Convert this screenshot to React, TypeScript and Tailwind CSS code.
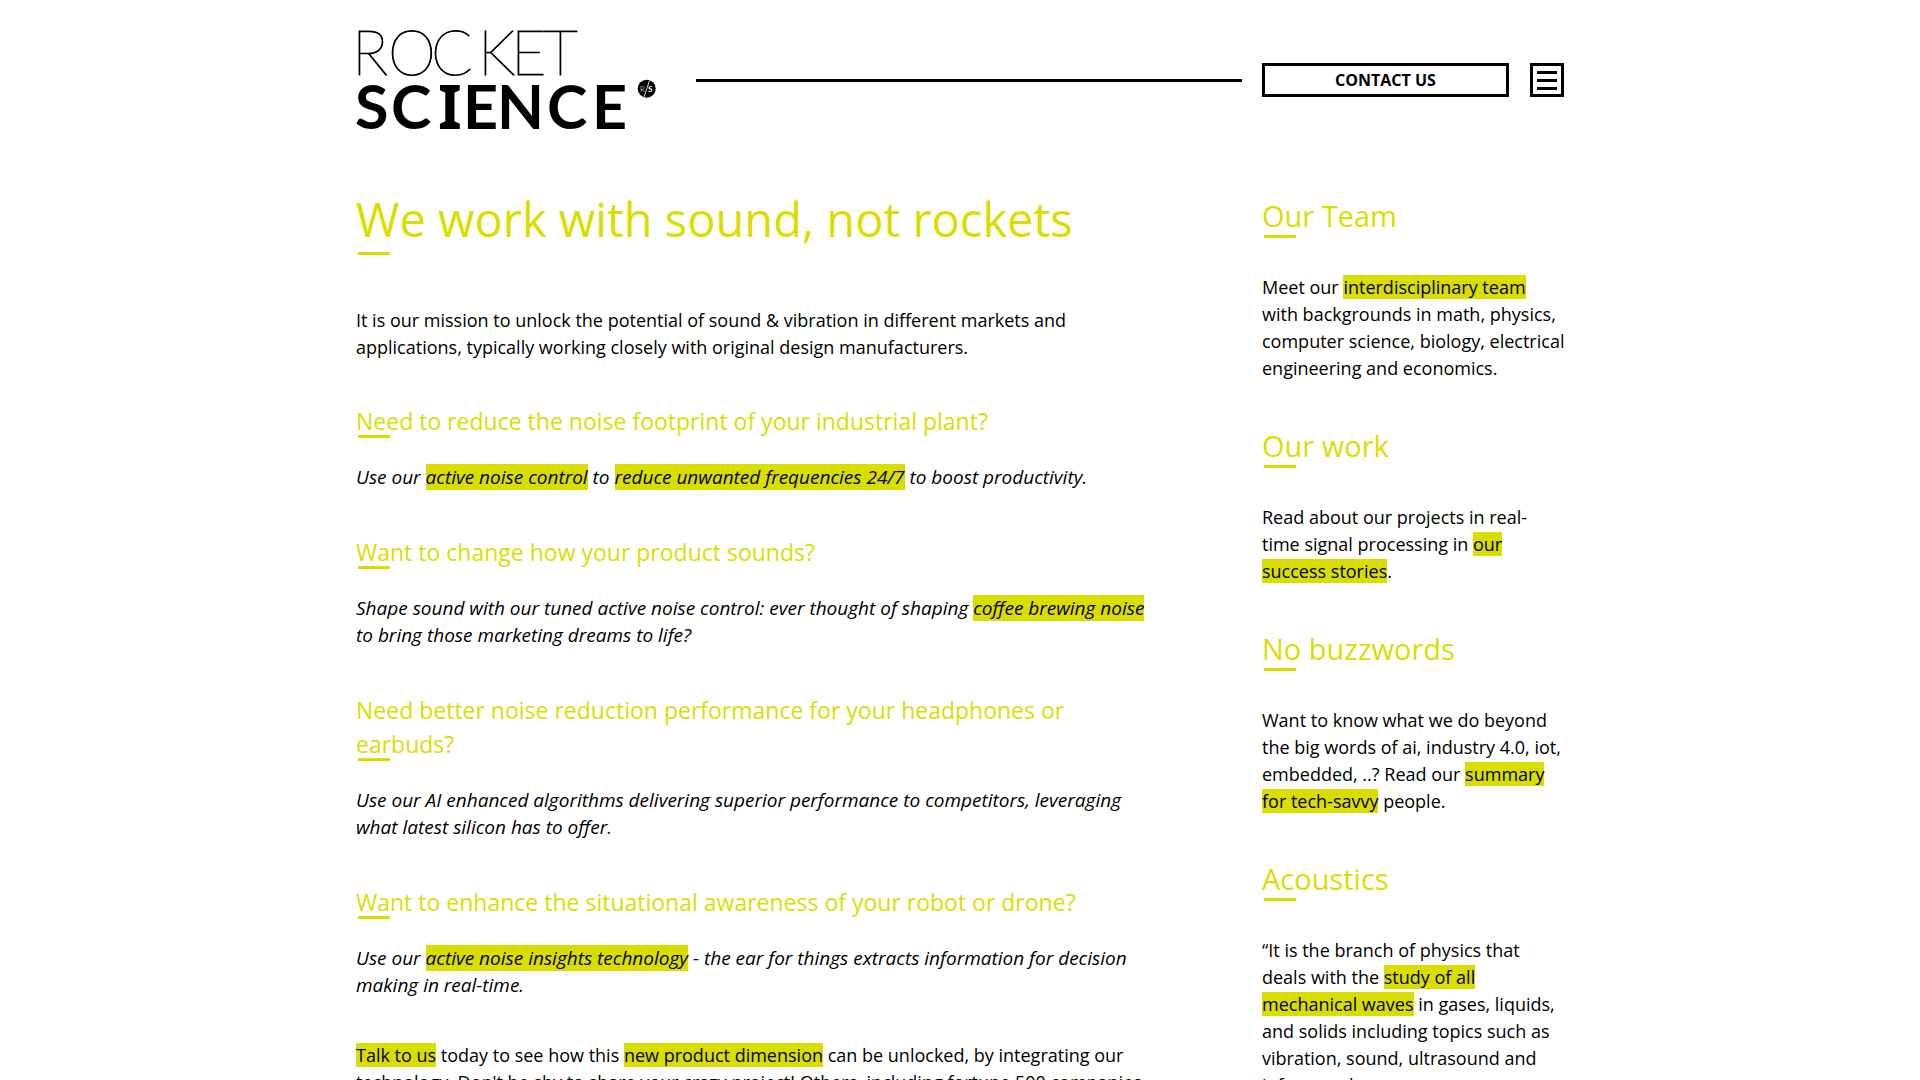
import type { ReactNode } from 'react'

function Mark({ children }: { children: ReactNode }) {
  return (
    <a href="#" className="bg-[#dade00] text-black">
      {children}
    </a>
  )
}

const underline =
  "relative text-[#dade00] after:absolute after:left-0.5 after:h-[3px] after:w-8 after:bg-[#dade00] after:content-['']"

function Question({ title, children }: { title: string; children: ReactNode }) {
  return (
    <section>
      <h3 className={`${underline} mb-[26px] text-[23px] leading-[34px] after:bottom-0`}>{title}</h3>
      <p className="text-[19px] italic">{children}</p>
    </section>
  )
}

function Teaser({ title, children }: { title: string; children: ReactNode }) {
  return (
    <section>
      <h2 className={`${underline} mb-[37px] text-[29px] leading-[42px] after:-bottom-px`}>{title}</h2>
      <p>{children}</p>
    </section>
  )
}

function Logo() {
  return (
    <svg width="300" height="102" viewBox="0 0 300 102" role="img" aria-label="Rocket Science" className="overflow-visible">
      <text
        x="-4 32 75 122 155 187"
        y="46"
        fontSize="61"
        fontWeight="100"
        stroke="#000"
        strokeWidth="1"
        className="font-['Lato',sans-serif]"
      >
        ROCKET
      </text>
      <g fontSize="61" fontWeight="700" className="font-['Lato',sans-serif]">
        <text x="-1 35" y="100">SC</text>
        <text x="82" y="100" className="font-['Noto_Sans',sans-serif]">I</text>
        <text x="107 141 191 236" y="100">ENCE</text>
      </g>
      <circle cx="290.7" cy="59.7" r="9" />
      <line x1="288" y1="68" x2="293.5" y2="51.5" stroke="#fff" strokeWidth="0.8" />
      <g fontSize="8" fill="#fff" className="font-['Lato',sans-serif]">
        <text x="284" y="63" fontWeight="300">R</text>
        <text x="292" y="63" fontWeight="700">S</text>
      </g>
    </svg>
  )
}

function Header() {
  return (
    <header className="flex items-center pt-[29px]">
      <a href="#" className="mr-10 shrink-0">
        <Logo />
      </a>
      <div className="mr-5 h-[3px] flex-1 bg-black" />
      <div className="flex w-[302px] shrink-0 justify-between">
        <button className="h-[34px] w-[247px] border-3 border-black text-base leading-6 font-bold">CONTACT US</button>
        <button
          aria-label="Menu"
          className="flex size-[34px] flex-col items-center justify-center gap-[5px] border-3 border-black"
        >
          <span className="h-[3px] w-5 bg-black" />
          <span className="h-[3px] w-5 bg-black" />
          <span className="h-[3px] w-5 bg-black" />
        </button>
      </div>
    </header>
  )
}

export default function App() {
  return (
    <div className="bg-white font-['Open_Sans',sans-serif] text-lg leading-[27px] text-black">
      <div className="mx-auto max-w-[1208px]">
        <Header />
        <div className="grid grid-cols-[minmax(0,1fr)_302px] gap-[100px] pt-[54px]">
          <main className="flex flex-col gap-[43px]">
            <div>
              <h1 className={`${underline} mb-[53px] text-[47px] leading-[69px] after:-bottom-px`}>
                We work with sound, not rockets
              </h1>
              <p>
                It is our mission to unlock the potential of sound &amp; vibration in different markets and
                applications, typically working closely with original design manufacturers.
              </p>
            </div>
            <div className="flex flex-col gap-11">
              <Question title="Need to reduce the noise footprint of your industrial plant?">
                Use our <Mark>active noise control</Mark> to <Mark>reduce unwanted frequencies 24/7</Mark> to boost
                productivity.
              </Question>
              <Question title="Want to change how your product sounds?">
                Shape sound with our tuned active noise control: ever thought of shaping{' '}
                <Mark>coffee brewing noise</Mark> to bring those marketing dreams to life?
              </Question>
              <Question title="Need better noise reduction performance for your headphones or earbuds?">
                Use our AI enhanced algorithms delivering superior performance to competitors, leveraging what latest
                silicon has to offer.
              </Question>
              <Question title="Want to enhance the situational awareness of your robot or drone?">
                Use our <Mark>active noise insights technology</Mark> - the ear for things extracts information for
                decision making in real-time.
              </Question>
            </div>
            <p>
              <Mark>Talk to us</Mark> today to see how this <Mark>new product dimension</Mark> can be unlocked, by
              integrating our technology. Don't be shy to share your crazy project! Others, including fortune 500
              companies
            </p>
          </main>

          <aside className="-mr-px flex flex-col gap-[43px] pt-2.5">
            <Teaser title="Our Team">
              Meet our <Mark>interdisciplinary team</Mark> with backgrounds in math, physics, computer science,
              biology, electrical engineering and economics.
            </Teaser>
            <Teaser title="Our work">
              Read about our projects in real-
              <br />
              time signal processing in <Mark>our success stories</Mark>.
            </Teaser>
            <Teaser title="No buzzwords">
              Want to know what we do beyond the big words of ai, industry 4.0, iot, embedded, ..? Read our{' '}
              <Mark>summary for tech-savvy</Mark> people.
            </Teaser>
            <Teaser title="Acoustics">
              “It is the branch of physics that deals with the <Mark>study of all mechanical waves</Mark> in gases,
              liquids, and solids including topics such as vibration, sound, ultrasound and infrasound.
            </Teaser>
          </aside>
        </div>
      </div>
    </div>
  )
}
